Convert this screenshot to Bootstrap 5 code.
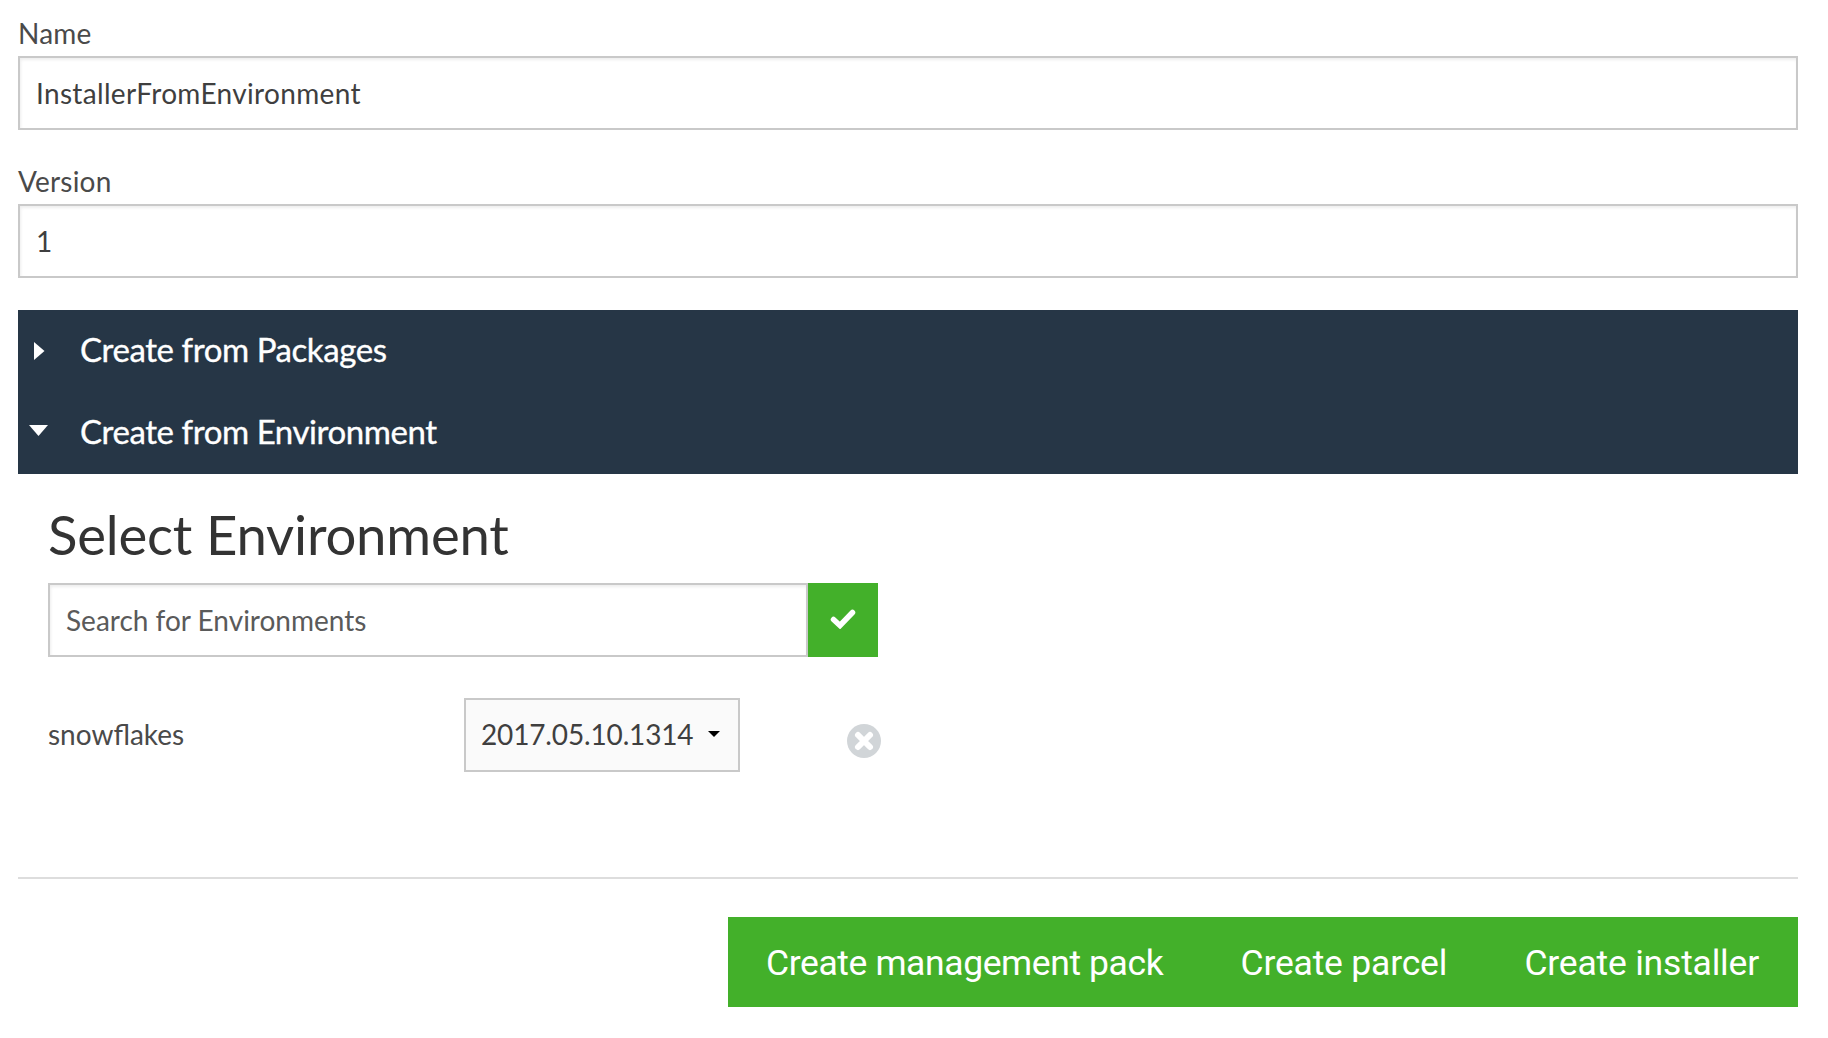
<!doctype html>
<html lang="en">
<head>
<meta charset="utf-8">
<title>Create installer</title>
<link href="https://cdn.jsdelivr.net/npm/bootstrap@5.3.0/dist/css/bootstrap.min.css" rel="stylesheet">
<style>
html,body{background:#fff;height:1038px;overflow:hidden}
body{font-family:Lato,"Liberation Sans",sans-serif;color:#4a4a4a;font-size:28px;line-height:1.2}
.sheet{padding:16px 30px 0 18px}
.fld-label{display:block;font-size:28px;line-height:34px;margin:0 0 6px;color:#4a4a4a;letter-spacing:.2px}
.fld-input{height:74px;border:2px solid #c9c9c9;border-radius:0;font-size:28px;color:#3f3f3f;padding:0 16px;box-shadow:inset 1px 2px 3px rgba(0,0,0,.07);font-family:inherit}
.fld-input::placeholder{color:#5a5a5a;opacity:1}
.wide-text{letter-spacing:.33px}
.fld-gap{margin-bottom:34px}
.dark-panel{background:#263646;color:#fff;height:164px;margin-top:32px;font-size:33px;-webkit-text-stroke:.35px #fff}
.dark-row{height:82px;padding:0 0 2px 62px;position:relative;letter-spacing:-.42px}
.dark-row svg{position:absolute}
.sel-title{font-size:54.500px;font-weight:400;color:#333;line-height:68px;margin:26px 0 15px;letter-spacing:-.2px}
.env-box{padding-left:30px}
.search-wrap{width:830px}
.srch-input{width:760px;flex:none}
.ok-btn{width:70px;height:74px;background:#43b02a;border:0;border-radius:0;padding:0 0 2px}
.ok-btn:hover{background:#43b02a}
.env-row{margin-top:41px;height:74px}
.env-name{width:416px;font-size:28px;color:#4a4a4a}
.ver-btn{width:276px;height:74px;background:#fafafa;border:2px solid #c9c9c9;border-radius:0;font-size:28px;color:#3f3f3f;padding:0 0 2px 15px;font-family:inherit;letter-spacing:-.15px}
.ver-btn:hover{background:#fafafa;border-color:#c9c9c9;color:#3f3f3f}
.caret-mark{width:0;height:0;border:6px solid transparent;border-top:6px solid #000;border-bottom:0;margin-left:15px}
.rm-ico{margin-left:107px;margin-top:11px}
.rule{height:2px;background:#ddd;margin:105px 0 38px}
.act-bar{background:#43b02a;height:90px;width:1070px;padding:2px 39px 0 38px}
.act-btn{background:none;border:0;color:#fff;font-family:Roboto,sans-serif;font-size:35.500px;padding:0;white-space:nowrap;letter-spacing:-.2px}
.act-long{letter-spacing:-.4px}
</style>
</head>
<body>
<div class="sheet">
  <form>
    <div class="fld-gap">
      <label class="fld-label" for="nm">Name</label>
      <input id="nm" class="form-control fld-input wide-text" value="InstallerFromEnvironment">
    </div>
    <div>
      <label class="fld-label" for="vr">Version</label>
      <input id="vr" class="form-control fld-input" value="1">
    </div>
    <div class="dark-panel">
      <div class="dark-row d-flex align-items-center">
        <svg width="11" height="18" viewBox="0 0 11 18" style="left:16px;top:32px"><path d="M0 0L10.500 9L0 18Z" fill="#fff"/></svg>
        Create from Packages
      </div>
      <div class="dark-row d-flex align-items-center">
        <svg width="19" height="11" viewBox="0 0 19 11" style="left:11px;top:33px"><path d="M0 0H19L9.500 11Z" fill="#fff"/></svg>
        Create from Environment
      </div>
    </div>
    <div class="env-box">
      <h2 class="sel-title">Select Environment</h2>
      <div class="d-flex search-wrap">
        <input class="form-control fld-input srch-input" placeholder="Search for Environments">
        <button type="button" class="btn ok-btn d-flex align-items-center justify-content-center" aria-label="Confirm">
          <svg width="26" height="20" viewBox="0 0 26 20"><path d="M3.500 10.500L10 16.500L22.500 3.500" fill="none" stroke="#fff" stroke-width="5.500" stroke-linecap="round"/></svg>
        </button>
      </div>
      <div class="d-flex align-items-center env-row">
        <div class="env-name">snowflakes</div>
        <button type="button" class="btn ver-btn d-flex align-items-center">2017.05.10.1314<span class="caret-mark"></span></button>
        <svg class="rm-ico" width="34" height="34" viewBox="0 0 34 34" aria-label="Remove"><circle cx="17" cy="17" r="17" fill="#d1d5d8"/><path d="M11 11L23 23M23 11L11 23" stroke="#fff" stroke-width="6" stroke-linecap="round"/></svg>
      </div>
    </div>
    <div class="rule"></div>
    <div class="d-flex justify-content-end">
      <div class="act-bar d-flex align-items-center justify-content-between">
        <button type="button" class="act-btn act-long">Create management pack</button>
        <button type="button" class="act-btn">Create parcel</button>
        <button type="button" class="act-btn">Create installer</button>
      </div>
    </div>
  </form>
</div>
<script src="https://cdn.jsdelivr.net/npm/bootstrap@5.3.0/dist/js/bootstrap.bundle.min.js"></script>
</body>
</html>
